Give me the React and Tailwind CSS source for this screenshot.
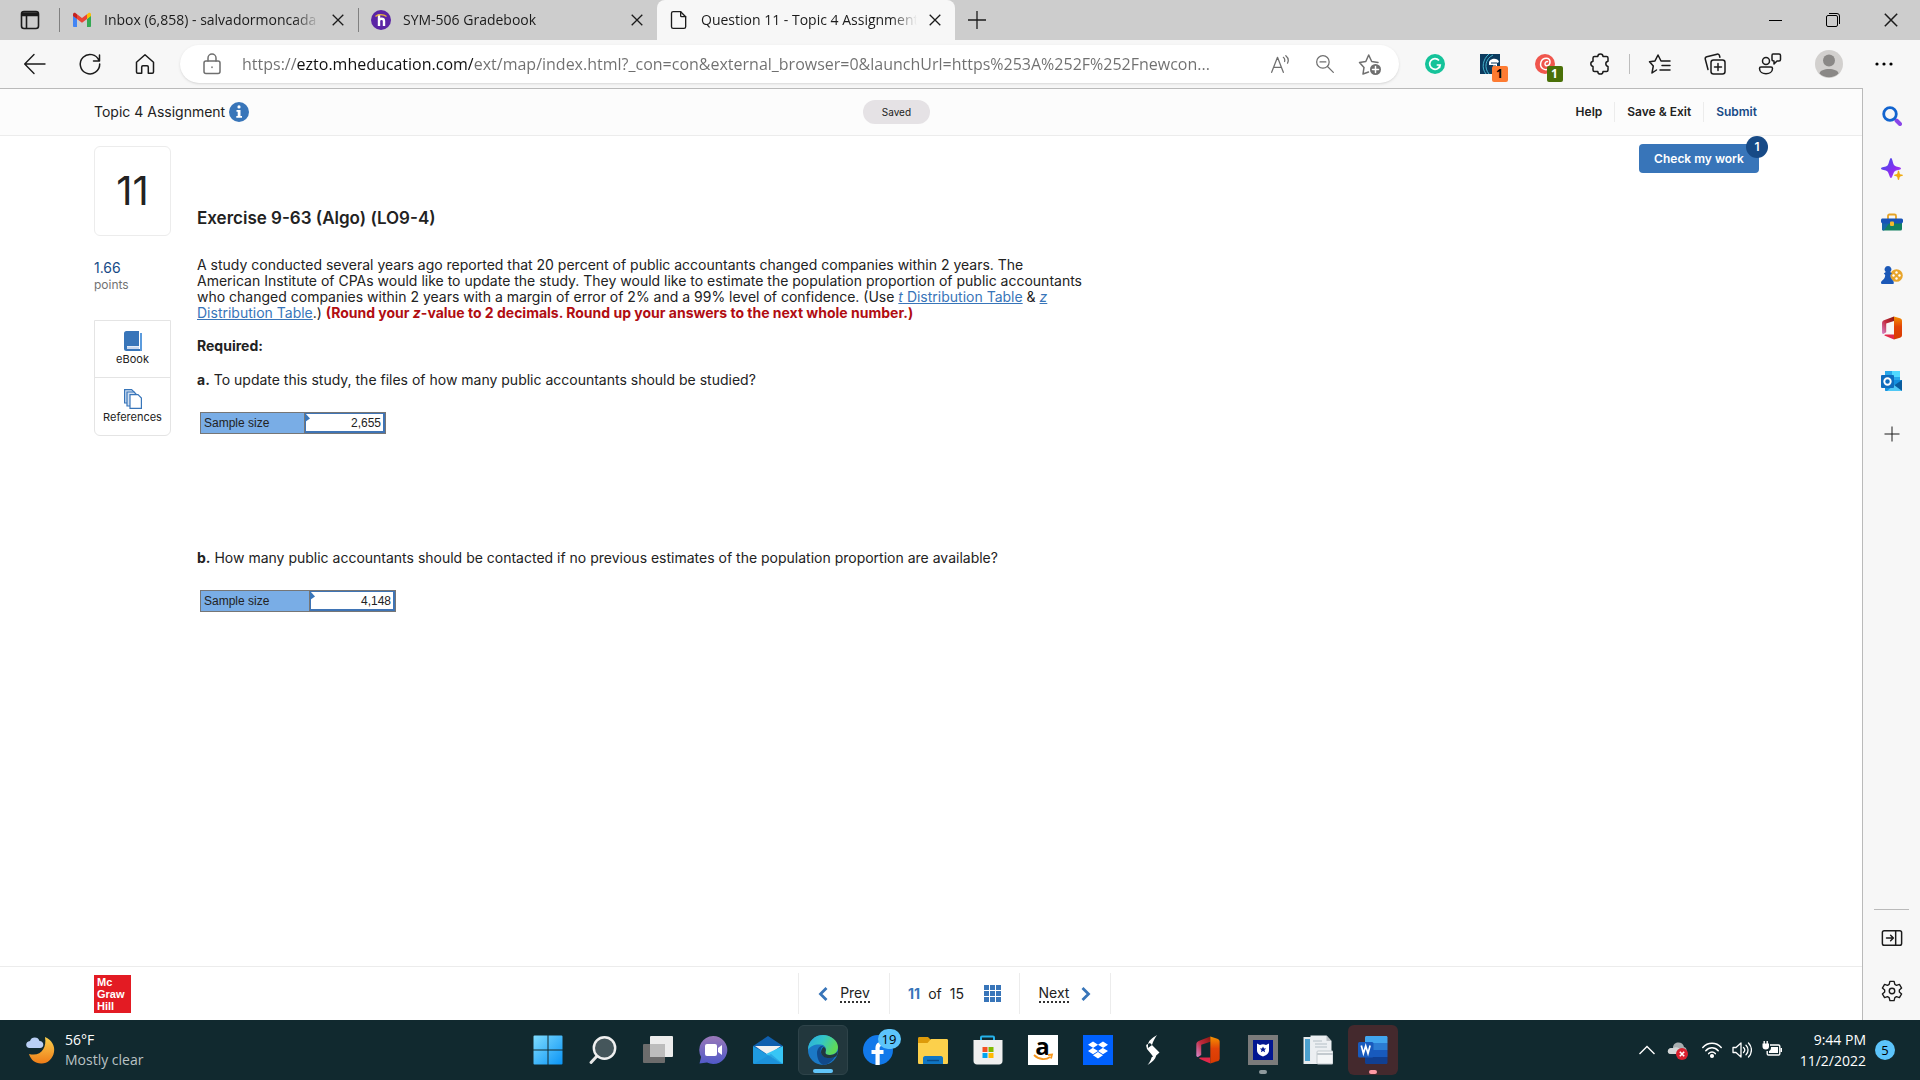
import { FaDropbox } from "react-icons/fa6";

const tabs = [
  { id: "mail", title: "Inbox (6,858) - salvadormoncada", icon: GmailIcon },
  { id: "grades", title: "SYM-506 Gradebook", icon: HonorlockIcon },
  { id: "question", title: "Question 11 - Topic 4 Assignment", icon: PageIcon, active: true }
];

const url =
  "https://ezto.mheducation.com/ext/map/index.html?_con=con&external_browser=0&launchUrl=https%253A%252F%252Fnewcon...";

function Line({ className = "w-6 h-6", width = 1.5, children }) {
  return (
    <svg className={className} viewBox="0 0 24 24" fill="none" stroke="currentColor" strokeWidth={width} strokeLinecap="round" strokeLinejoin="round">
      {children}
    </svg>
  );
}

function GmailIcon() {
  return (
    <svg className="w-5 h-5" viewBox="0 0 20 20">
      <path d="M1 5v11.2c0 .5.4.8.8.8H5V9z" fill="#4285f4" />
      <path d="M19 5v11.2c0 .5-.4.8-.8.8H15V9z" fill="#34a853" />
      <path d="M15 4.2V9l4-3V4.6c0-1.6-1.6-2.2-2.7-1.4z" fill="#fbbc04" />
      <path d="M5 9V4.2l5 3.8 5-3.8V9l-5 3.8z" fill="#ea4335" />
      <path d="M1 4.6V6l4 3V4.2L3.7 3.2C2.6 2.4 1 3 1 4.6z" fill="#c5221f" />
    </svg>
  );
}

function HonorlockIcon() {
  return (
    <svg className="w-5 h-5" viewBox="0 0 20 20">
      <circle cx="10" cy="10" r="10" fill="#5b25a5" />
      <path d="M8 4.5v11.500M8 11c0-3 5-3 5 0v5" fill="none" stroke="#fff" strokeWidth="2.4" />
      <path d="M4.500 6.500c2-2.500 8-2.500 11 0" fill="none" stroke="#e8b53a" strokeWidth="1.3" />
    </svg>
  );
}

function PageIcon() {
  return (
    <Line className="w-5 h-6" width={1.6}>
      <path d="M5 2h9l6 6v12a2 2 0 0 1-2 2H5a2 2 0 0 1-2-2V4a2 2 0 0 1 2-2z" />
      <path d="M14 2v5a1 1 0 0 0 1 1h5" />
    </Line>
  );
}

function CloseIcon({ className = "w-3 h-3" }) {
  return (
    <svg className={className} viewBox="0 0 12 12" fill="none" stroke="currentColor" strokeWidth="1.3">
      <path d="M.7.7l10.600 10.600M11.300.7L.7 11.300" />
    </svg>
  );
}

function OfficeIcon({ className = "w-6 h-6" }) {
  return (
    <svg className={className} viewBox="0 0 24 24">
      <defs>
        <linearGradient id="office-left" x1="0" y1="1" x2="1" y2="0">
          <stop offset="0" stopColor="#d98bd0" />
          <stop offset=".5" stopColor="#c22a3e" />
          <stop offset="1" stopColor="#8c1810" />
        </linearGradient>
        <linearGradient id="office-right" x1="0" y1="0" x2="0" y2="1">
          <stop offset="0" stopColor="#f59200" />
          <stop offset=".45" stopColor="#e24308" />
          <stop offset="1" stopColor="#d83b01" />
        </linearGradient>
      </defs>
      <path d="M14 .5L4 4.300C2.500 5 2 6 2 7.500v9.200c0 1 1 1.500 1.800 1l2.400-1.400V7.500L14 5z" fill="url(#office-left)" />
      <path d="M5.500 18.500H14v5l-9-3.700c-1-.5-.6-1.300.5-1.300z" fill="#e3294b" />
      <path d="M14 .5l6 1.800c1.300.4 2 1.400 2 2.700v14c0 1.300-.7 2.300-2 2.700l-6 1.800z" fill="url(#office-right)" />
    </svg>
  );
}

function Tab({ tab }) {
  const Icon = tab.icon;
  return (
    <div className={`w-[298px] min-w-0 h-10 flex items-center pl-3 pr-[14px] ${tab.active ? "bg-[#f7f7f7] rounded-t-lg" : ""}`}>
      <Icon />
      <span className="flex-1 min-w-0 ml-3 overflow-hidden whitespace-nowrap text-sm text-[#1b1b1b] [mask-image:linear-gradient(to_right,black_88%,transparent)]">
        {tab.title}
      </span>
      <button aria-label={`Close ${tab.title}`} className="ml-3">
        <CloseIcon />
      </button>
    </div>
  );
}

function TabBar() {
  return (
    <header className="h-10 flex items-center bg-[#cdcdcd] text-[#1b1b1b]">
      <button aria-label="Tab actions" className="w-[59px] flex justify-center">
        <svg className="w-5 h-5" viewBox="0 0 20 20" fill="none" stroke="currentColor" strokeWidth="1.6">
          <rect x="1.5" y="1.5" width="17" height="17" rx="2.5" />
          <path d="M2 3.500h16M2 5h16" strokeWidth="2.5" />
          <path d="M6.500 6v12" />
        </svg>
      </button>
      <span className="w-px h-6 bg-[#808080]" />
      <Tab tab={tabs[0]} />
      <span className="w-px h-6 bg-[#808080]" />
      <Tab tab={tabs[1]} />
      <Tab tab={tabs[2]} />
      <button aria-label="New tab" className="ml-3 p-px">
        <svg className="w-[18px] h-[18px]" viewBox="0 0 18 18" stroke="currentColor" strokeWidth="1.3">
          <path d="M9 0v18M0 9h18" />
        </svg>
      </button>
      <div className="ml-auto flex">
        <button aria-label="Minimize" className="w-[58px] flex justify-center items-center">
          <span className="w-[13px] h-px bg-black" />
        </button>
        <button aria-label="Restore" className="w-[58px] flex justify-center">
          <svg className="w-[14px] h-[14px]" viewBox="0 0 14 14" fill="none" stroke="black">
            <rect x=".5" y="2.5" width="11" height="11" rx="1.5" />
            <path d="M3 .5h8a2.500 2.500 0 0 1 2.500 2.500v8" />
          </svg>
        </button>
        <button aria-label="Close window" className="w-[58px] flex justify-center">
          <CloseIcon className="w-[14px] h-[14px]" />
        </button>
      </div>
    </header>
  );
}

function ToolButton({ label, children }) {
  return (
    <button aria-label={label} className="w-[55px] shrink-0 flex justify-center">
      {children}
    </button>
  );
}

function Badge({ className }) {
  return (
    <span className={`absolute left-3 top-3 w-4 h-4 rounded-xs text-xs leading-4 font-bold text-center ${className}`}>1</span>
  );
}

function Toolbar() {
  return (
    <div className="h-12 flex items-center bg-[#f7f7f7] text-[#1b1b1b] pl-[7px] pr-[9px]">
      <ToolButton label="Back">
        <Line width={1.4}><path d="M22 12H2M11 2.500L1.700 12l9.300 9.500" /></Line>
      </ToolButton>
      <ToolButton label="Refresh">
        <Line width={1.5}><path d="M21 8.500A9.700 9.700 0 1 0 21.700 12M21.500 3v6h-6" /></Line>
      </ToolButton>
      <ToolButton label="Home">
        <Line width={1.5}><path d="M3.500 10.200L12 2.700l8.500 7.500V20c0 .7-.5 1.200-1.200 1.200h-4V15c0-.7-.5-1.200-1.200-1.200H9.900c-.7 0-1.200.5-1.200 1.200v6.200h-4c-.7 0-1.200-.5-1.200-1.200z" /></Line>
      </ToolButton>
      <div className="flex-1 min-w-0 h-[38px] mx-2 pl-5 pr-[7px] flex items-center rounded-full bg-white text-[#6f6f6f] shadow-sm">
        <Line className="w-6 h-6 shrink-0">
          <rect x="4" y="9" width="16" height="12.5" rx="2" />
          <path d="M8 9V6a4 4 0 0 1 8 0v3M12 15v.5" />
        </Line>
        <input
          aria-label="Address"
          readOnly
          value={url}
          className="flex-1 min-w-0 ml-[18px] h-8 outline-none text-base text-transparent bg-clip-text bg-[linear-gradient(to_right,#6f6f6f_55px,#111_55px,#111_231px,#6f6f6f_231px)]"
        />
        <button aria-label="Read aloud" className="w-[45px] flex justify-center">
          <Line className="w-5 h-5" width={1.5}><path d="M2 22L9 4l7 18M4.500 16h9M16 4c1.500 1 2 3 1.500 5M19 2c3 2.500 3.500 6 2 9" /></Line>
        </button>
        <button aria-label="Zoom" className="w-[45px] flex justify-center">
          <Line className="w-5 h-5" width={1.5}><circle cx="9.5" cy="9.5" r="7.5" /><path d="M15 15l7 7M6 9.500h7" /></Line>
        </button>
        <button aria-label="Add to favorites" className="w-[45px] flex justify-center">
          <Line className="w-6 h-6">
            <path d="M10.500 20L5 22l1-6.600L1.500 10.500l6.300-1L10.700 3l3 6.500 6.300 1" />
            <circle cx="17.5" cy="17.5" r="5.5" fill="#6f6f6f" stroke="none" />
            <path d="M17.500 14.500v6M14.500 17.500h6" stroke="#fff" />
          </Line>
        </button>
      </div>
      <ToolButton label="Grammarly">
        <svg className="w-5 h-5" viewBox="0 0 20 20">
          <circle cx="10" cy="10" r="10" fill="#15c39a" />
          <path d="M14 6.500A5.300 5.300 0 1 0 15.200 11h-3.500M15.200 11l-.8 3" fill="none" stroke="#fff" strokeWidth="1.7" />
        </svg>
      </ToolButton>
      <ToolButton label="Capital One Shopping, 1 notification">
        <span className="relative">
          <svg className="w-5 h-5" viewBox="0 0 20 20">
            <rect width="20" height="20" fill="#0b3a5e" />
            <path d="M6 20C1 14 3 5 9 0M9 20C4 14 5 5 13 1" fill="none" stroke="#45b5cf" strokeWidth="1" />
            <path d="M9 9c0-5 9-6 10-1l-2 1v9h-4v-7H9z" fill="#fff" />
            <path d="M11 9h6M11 12h5" stroke="#0b3a5e" />
          </svg>
          <Badge className="bg-[#fd7b32] text-black" />
        </span>
      </ToolButton>
      <ToolButton label="Coupons, 1 notification">
        <span className="relative">
          <svg className="w-5 h-5" viewBox="0 0 20 20">
            <circle cx="10" cy="10" r="10" fill="#f0564d" />
            <path d="M15 14c-5 4-11 0-9-6 2-5 9-5 9 0 0 4-5 5-5 2 0-2 2-3 3-2" fill="none" stroke="#fff" strokeWidth="1.5" />
          </svg>
          <Badge className="bg-[#4a7008] text-white" />
        </span>
      </ToolButton>
      <ToolButton label="Extensions">
        <Line>
          <path d="M6.500 4.500h3.300a2.600 2.600 0 0 1 5.200 0h3.500c.8 0 1.500.7 1.500 1.500v3.200a2.700 2.700 0 0 0 0 5.300V18c0 .8-.7 1.500-1.500 1.500H15a2.600 2.600 0 0 1-5.200 0H6.500c-.8 0-1.500-.7-1.500-1.500v-3.500a2.700 2.700 0 0 1 0-5.300V6c0-.8.7-1.500 1.500-1.500z" />
        </Line>
      </ToolButton>
      <span className="w-px h-5 mx-[2px] bg-[#bdbdbd]" />
      <ToolButton label="Favorites">
        <Line>
          <path d="M8.500 18L4 21l1.300-7L1.500 9.800l5.500-.9L10 3l3 6h9M14 13.500h8M12 18h10" />
        </Line>
      </ToolButton>
      <ToolButton label="Collections">
        <Line>
          <rect x="8" y="8" width="14" height="14" rx="2.5" />
          <path d="M15 11.500v7M11.500 15h7M5 17.500L2.300 7.200C2 6 2.600 5 3.800 4.700L14 2.200c1.200-.3 2.200.3 2.500 1.500l.4 1.500" />
        </Line>
      </ToolButton>
      <ToolButton label="Shared browsing">
        <Line>
          <circle cx="8" cy="9" r="3.5" />
          <path d="M3 15h10c1 0 1.500.5 1.500 1.500 0 7-13 7-13 0 0-1 .5-1.500 1.500-1.500zM15 2h6c1 0 1.500.7 1.500 1.500v4c0 1-.7 1.500-1.500 1.500h-2l-3 3V9c-1 0-2-.5-2-1.500v-4C14 2.600 14.500 2 15 2z" />
        </Line>
      </ToolButton>
      <div className="ml-1 flex items-center">
        <ToolButton label="Profile">
          <svg className="w-7 h-7" viewBox="0 0 28 28">
            <circle cx="14" cy="14" r="14" fill="#d2d0ce" />
            <circle cx="14" cy="10.500" r="6" fill="#8a8886" />
            <path d="M4.500 23.500C5 17.500 23 17.500 23.500 23.500a14 14 0 0 1-19 0z" fill="#8a8886" />
          </svg>
        </ToolButton>
        <ToolButton label="Settings and more">
          <svg className="w-[18px] h-1" viewBox="0 0 18 4">
            <circle cx="2" cy="2" r="1.6" /><circle cx="9" cy="2" r="1.6" /><circle cx="16" cy="2" r="1.6" />
          </svg>
        </ToolButton>
      </div>
    </div>
  );
}

function PageHeader() {
  return (
    <div className="h-12 pl-[94px] pr-[93px] flex items-center justify-between bg-[#fcfcfc] border-t border-b border-t-[#bababa] border-b-[#ececec]">
      <div className="flex items-center gap-1">
        <span className="text-sm">Topic 4 Assignment</span>
        <button aria-label="Assignment information">
          <svg className="w-5 h-5" viewBox="0 0 20 20">
            <circle cx="10" cy="10" r="10" fill="#3875b9" />
            <path d="M10 3.300a1.600 1.600 0 1 1 0 3.200 1.600 1.600 0 0 1 0-3.200zM7.500 8h4v6H13v1.800H7.300V14h1.400V9.800H7.500z" fill="#fff" />
          </svg>
        </button>
      </div>
      <span className="mr-5 px-[19px] h-6 rounded-full bg-[#e5e2e5] text-[10px] leading-6">Saved</span>
      <nav className="flex items-center text-xs font-semibold leading-5 divide-x divide-[#ececec]">
        <a href="#help" className="px-3">Help</a>
        <a href="#exit" className="px-3">Save &amp; Exit</a>
        <a href="#submit" className="px-3 text-[#174a86]">Submit</a>
      </nav>
    </div>
  );
}

function QuestionAside() {
  return (
    <aside className="w-[77px] shrink-0">
      <div className="h-[90px] flex items-center justify-center border border-[#ececec] rounded-md text-[40px]">11</div>
      <p className="mt-6 text-sm leading-4 text-[#174a86]">1.66</p>
      <p className="text-xs leading-[18px] text-[#727272]">points</p>
      <div className="mt-[26px] border border-[#e4e4e4] rounded-b-md divide-y divide-[#e4e4e4] text-[11px] leading-4">
        <button className="w-full h-[57px] flex flex-col items-center justify-center">
          <svg className="w-[18px] h-5" viewBox="0 0 18 20">
            <path d="M2.500 0H15v15H3v3h14V2h1v18H2.500A2.500 2.500 0 0 1 0 17.500v-15A2.500 2.500 0 0 1 2.500 0z" fill="#3875b9" />
            <path d="M3 15.500h12v2.500H3z" fill="#c9d8ef" />
            <path d="M16 2h2v18h-2z" fill="#5b9bdd" />
          </svg>
          eBook
        </button>
        <button className="w-full h-[57px] flex flex-col items-center justify-center">
          <svg className="w-[18px] h-5" viewBox="0 0 18 20" stroke="#3875b9" strokeWidth="1.2">
            <path d="M.6.6h7l3 3V14H.6z" fill="#d3e0f1" />
            <path d="M3 3h7l3 3v11H3z" fill="#d3e0f1" />
            <path d="M6 5.600h8l3.400 3.400v10.400H6z" fill="#fff" />
          </svg>
          References
        </button>
      </div>
    </aside>
  );
}

function AnswerTable({ id, value, labelWidth, inputWidth }) {
  return (
    <table className="ml-[3px] border-collapse font-['Liberation_Sans',sans-serif] text-xs">
      <tbody>
        <tr>
          <th scope="row" className={`${labelWidth} h-[21px] p-0 pl-[3px] border border-[#767676] bg-[#79ade6] text-left font-normal`}>
            <label htmlFor={id}>Sample size</label>
          </th>
          <td className={`${inputWidth} relative p-0 border border-[#767676]`}>
            <input id={id} defaultValue={value} className="block w-full h-5 pr-[2px] border-2 border-t border-l border-[#3f74b5] bg-white text-right outline-none" />
            <span className="absolute left-0 top-0 w-[5px] h-[9px] bg-[#3875b9] [clip-path:polygon(0_0,100%_60%,0_100%)]" />
          </td>
        </tr>
      </tbody>
    </table>
  );
}

function Question() {
  return (
    <article className="ml-[26px] flex-1 text-sm leading-4">
      <h1 className="mt-[60px] text-[17px] leading-6 font-semibold">Exercise 9-63 (Algo) (LO9-4)</h1>
      <p className="mt-[27px]">
        A study conducted several years ago reported that 20 percent of public accountants changed companies within 2 years. The
        <br />
        American Institute of CPAs would like to update the study. They would like to estimate the population proportion of public accountants
        <br />
        who changed companies within 2 years with a margin of error of 2% and a 99% level of confidence. (Use{" "}
        <a href="#t-table" className="text-[#3875b9] underline"><i>t</i> Distribution Table</a> &amp;{" "}
        <a href="#z-table" className="text-[#3875b9] underline"><i>z</i><br />Distribution Table</a>.){" "}
        <strong className="font-bold text-[#b10d12]">
          (Round your <i>z</i>-value to 2 decimals. Round up your answers to the next whole number.)
        </strong>
      </p>
      <p className="mt-[17px] font-bold">Required:</p>
      <p className="mt-[18px] mb-6"><b>a.</b> To update this study, the files of how many public accountants should be studied?</p>
      <AnswerTable id="answer-a" value="2,655" labelWidth="w-[104px]" inputWidth="w-[81px]" />
      <p className="mt-[116px] mb-6"><b>b.</b> How many public accountants should be contacted if no previous estimates of the population proportion are available?</p>
      <AnswerTable id="answer-b" value="4,148" labelWidth="w-[109px]" inputWidth="w-[86px]" />
    </article>
  );
}

function Chevron({ flip }) {
  return (
    <svg className={`w-[10px] h-[14px] ${flip ? "rotate-180" : ""}`} viewBox="0 0 10 14" fill="none" stroke="#3875b9" strokeWidth="2.8">
      <path d="M8.500 1L2.500 7l6 6" />
    </svg>
  );
}

function PageFooter() {
  return (
    <footer className="h-[54px] pl-[94px] pr-[84px] flex items-center border-t border-[#ececec]">
      <div className="w-[37px] h-[38px] pl-[3px] flex flex-col justify-center bg-[#e31b23] text-white text-[11px] leading-3 font-bold font-['Liberation_Sans',sans-serif]">
        <span>Mc</span>
        <span>Graw</span>
        <span>Hill</span>
      </div>
      <nav className="flex-1 flex justify-center text-sm leading-[41px]">
        <button className="w-[91px] flex items-center justify-center gap-3 border-l border-[#ececec]">
          <Chevron />
          <span className="leading-4 border-b-2 border-dotted border-[#333]">Prev</span>
        </button>
        <div className="w-[130px] flex items-center justify-center border-l border-[#ececec]">
          <b className="text-[#3875b9]">11</b>
          <span className="ml-2">of</span>
          <span className="ml-2">15</span>
          <button aria-label="Question list" className="ml-5">
            <svg className="w-[17px] h-[17px]" viewBox="0 0 17 17" fill="#3875b9">
              <path d="M0 0h5v5H0zM6 0h5v5H6zM12 0h5v5h-5zM0 6h5v5H0zM6 6h5v5H6zM12 6h5v5h-5zM0 12h5v5H0zM6 12h5v5H6zM12 12h5v5h-5z" />
            </svg>
          </button>
        </div>
        <button className="w-[92px] flex items-center justify-center gap-3 border-x border-[#ececec]">
          <span className="leading-4 border-b-2 border-dotted border-[#333]">Next</span>
          <Chevron flip />
        </button>
      </nav>
    </footer>
  );
}

function SideButton({ label, children }) {
  return (
    <button aria-label={label} className="w-full h-[53px] flex items-center justify-center">
      {children}
    </button>
  );
}

function Sidebar() {
  return (
    <aside className="w-[58px] shrink-0 pt-px pb-[3px] flex flex-col items-center bg-[#f7f7f7] border-l border-[#bababa] text-[#1b1b1b]">
      <SideButton label="Search">
        <svg className="w-5 h-5" viewBox="0 0 20 20" fill="none">
          <path d="M12.500 12.500l2 2" stroke="#777" strokeWidth="2" />
          <path d="M14.500 14.500l3.500 3.500" stroke="#8a45e8" strokeWidth="4" strokeLinecap="round" />
          <circle cx="8" cy="8" r="6.3" stroke="#1264cf" strokeWidth="2.8" />
        </svg>
      </SideButton>
      <SideButton label="Discover">
        <svg className="w-[22px] h-[22px]" viewBox="0 0 22 22">
          <defs>
            <linearGradient id="spark" x1="0" y1="0" x2="1" y2="1">
              <stop offset="0" stopColor="#3457e8" />
              <stop offset=".6" stopColor="#8a2df0" />
              <stop offset="1" stopColor="#c04bf5" />
            </linearGradient>
          </defs>
          <path d="M10 0c1.500 0 1.800 6 3.500 7.500S20 9 20 10.500s-5 1.500-6.500 3.000S11.500 20 10 20s-2-5-3.500-6.500S0 12 0 10.500 5 9 6.500 7.500 8.500 0 10 0z" fill="url(#spark)" />
          <path d="M17.500 12.500c1 0 .8 2.800 1.500 3.500s3 .5 3 1.300-2.200.7-3 1.400-.5 3.300-1.500 3.300-.8-2.600-1.500-3.300-3-.5-3-1.400 2.200-.6 3-1.300.5-3.500 1.500-3.500z" fill="#efab12" />
        </svg>
      </SideButton>
      <SideButton label="Tools">
        <svg className="w-[22px] h-[18px]" viewBox="0 0 22 18">
          <path d="M7 6V3c0-1 .5-1.500 1.500-1.500h5c1 0 1.500.5 1.500 1.500v3" fill="none" stroke="#e6a325" strokeWidth="1.8" />
          <path d="M1 9h20v7a1.500 1.500 0 0 1-1.500 1.500h-17A1.500 1.500 0 0 1 1 16z" fill="#128060" />
          <path d="M1 9h8l-6 8.500C2 17.500 1 17 1 16z" fill="#1767a8" />
          <path d="M1.500 5.500h19a1.500 1.500 0 0 1 1.500 1.500v1.500c0 1-1 2-2 2H2c-1 0-2-1-2-2V7c0-.8.7-1.500 1.500-1.500z" fill="#1753b8" />
          <rect x="9" y="8.500" width="4" height="4.500" rx="1" fill="#f3b92b" />
        </svg>
      </SideButton>
      <SideButton label="Games">
        <svg className="w-[22px] h-[18px]" viewBox="0 0 22 18">
          <circle cx="15.5" cy="9.5" r="6.3" fill="#e8a52c" />
          <g fill="#fff"><circle cx="15.5" cy="6.5" r="1.2" /><circle cx="15.5" cy="12.5" r="1.2" /><circle cx="12.5" cy="9.5" r="1.2" /><circle cx="18.5" cy="9.5" r="1.2" /></g>
          <path d="M7 0a3.400 3.400 0 0 1 2.200 6L11 7.500 9.300 9c0 3 1.500 4.500 3 6 .7 1 .7 3-.3 3H1c-1.300 0-1.300-2-.3-3 2-1.500 3.500-3 3.500-6L2.800 7.500 4.800 6A3.400 3.400 0 0 1 7 0z" fill="#1b58b7" />
        </svg>
      </SideButton>
      <SideButton label="Office"><OfficeIcon /></SideButton>
      <SideButton label="Outlook">
        <svg className="w-[22px] h-5" viewBox="0 0 22 20">
          <path d="M4 0h15v10H4z" fill="#28a8ea" />
          <path d="M11 0h8v6h-8z" fill="#50d9ff" />
          <path d="M4 9h17v10c0 .6-.4 1-1 1H5c-.6 0-1-.4-1-1z" fill="#1490df" />
          <path d="M13 14.500l8-5.500v11z" fill="#0a5c9e" />
          <path d="M6 20h15l-8-6z" fill="#50c8f5" />
          <rect y="4" width="13" height="13" rx="1" fill="#0f6cbd" />
          <circle cx="6.5" cy="10.5" r="3.2" fill="none" stroke="#fff" strokeWidth="1.9" />
        </svg>
      </SideButton>
      <SideButton label="Add">
        <svg className="w-4 h-4" viewBox="0 0 16 16" stroke="currentColor"><path d="M8 .5v15M.5 8h15" /></svg>
      </SideButton>
      <span className="mt-auto mb-px w-[35px] h-px bg-[#bababa]" />
      <SideButton label="Hide sidebar">
        <Line className="w-[22px] h-[22px]" width={1.6}><rect x="1.5" y="4" width="21" height="16" rx="2" /><path d="M16 4v16M6 12h7M10.500 9l3 3-3 3" /></Line>
      </SideButton>
      <SideButton label="Settings">
        <Line className="w-[22px] h-[22px]" width={1.5}>
          <path d="M9.700 1.500h4.600l.8 3.300 1.800 1 3.200-1 2.400 4-2.500 2.200v2l2.500 2.200-2.400 4-3.200-1-1.800 1-.8 3.300H9.700l-.8-3.300-1.800-1-3.200 1-2.400-4L4 13v-2L1.500 8.800l2.400-4 3.200 1 1.800-1z" />
          <circle cx="12" cy="12" r="3" />
        </Line>
      </SideButton>
    </aside>
  );
}

function TaskButton({ label, tile = "", dot = "", children }) {
  return (
    <button aria-label={label} className="w-[55px] h-[60px] flex items-center justify-center">
      <span className={`relative w-[50px] h-[50px] flex items-center justify-center rounded-md ${tile}`}>
        {children}
        {dot && <span className={`absolute bottom-px h-1 rounded-full ${dot}`} />}
      </span>
    </button>
  );
}

function TaskIcon({ children }) {
  return <svg className="w-[30px] h-[30px]" viewBox="0 0 30 30">{children}</svg>;
}

function TaskbarApps() {
  return (
    <div className="flex">
      <TaskButton label="Start">
        <TaskIcon>
          <defs>
            <linearGradient id="win" x1="0" y1="0" x2="1" y2="1">
              <stop offset="0" stopColor="#7fdcff" />
              <stop offset="1" stopColor="#0a94f5" />
            </linearGradient>
          </defs>
          <path d="M1.500.5h13v14H.5v-13a1 1 0 0 1 1-1zM15.500.5h13a1 1 0 0 1 1 1v13h-14zM.5 15.500h14v14h-13a1 1 0 0 1-1-1zM15.500 15.500h14v13a1 1 0 0 1-1 1h-13z" fill="url(#win)" />
        </TaskIcon>
      </TaskButton>
      <TaskButton label="Search">
        <TaskIcon>
          <path d="M9 21l-6 6.500" stroke="#e6e6e6" strokeWidth="3" strokeLinecap="round" />
          <circle cx="16.5" cy="13" r="10.7" fill="#45565b" stroke="#f0f0f0" strokeWidth="2.4" />
        </TaskIcon>
      </TaskButton>
      <TaskButton label="Task view">
        <TaskIcon>
          <rect y="9" width="22" height="19" rx="1" fill="#6c6c6c" />
          <rect x="7" y="1" width="23" height="21" rx="1" fill="#ececec" />
          <path d="M7 9h15v13H7z" fill="#bcbcbc" />
        </TaskIcon>
      </TaskButton>
      <TaskButton label="Chat">
        <TaskIcon>
          <defs>
            <linearGradient id="chat" x1="0" y1="0" x2="0" y2="1">
              <stop offset="0" stopColor="#9a78b8" />
              <stop offset="1" stopColor="#5059c9" />
            </linearGradient>
          </defs>
          <path d="M15 1a14 14 0 1 1-6 26.500l-7.500 1 1.600-6.500A14 14 0 0 1 15 1z" fill="url(#chat)" />
          <rect x="7" y="9" width="12" height="12" rx="2" fill="#fff" />
          <path d="M20 13l4-3v10l-4-3z" fill="#fff" />
        </TaskIcon>
      </TaskButton>
      <TaskButton label="Mail">
        <TaskIcon>
          <path d="M0 11L15 1l15 10-15 12z" fill="#0f5fae" />
          <path d="M2 11h26l-13 9z" fill="#f1f1f1" />
          <path d="M0 11l30 18H1a1 1 0 0 1-1-1z" fill="#1f9be0" />
          <path d="M30 11v17a1 1 0 0 1-1 1L13 19z" fill="#37c6f5" />
          <path d="M30 29H1l17-10z" fill="#1a8ad6" opacity=".5" />
        </TaskIcon>
      </TaskButton>
      <TaskButton label="Microsoft Edge" tile="bg-[#22373d] border border-[#2e4349]" dot="w-5 bg-[#61c5f8]">
        <TaskIcon>
          <defs>
            <linearGradient id="edge-top" x1="0" y1="0" x2="1" y2=".4">
              <stop offset="0" stopColor="#2ba9e0" />
              <stop offset=".5" stopColor="#33c6c8" />
              <stop offset="1" stopColor="#5fd957" />
            </linearGradient>
          </defs>
          <circle cx="15" cy="15" r="15" fill="#1b79c6" />
          <path d="M0 15C0 6 7 0 15 0s15 6 15 12c0 5-4 8-8 8-4 0-5-1.500-4.500-3 1.500-3 0-7-5-7.500C7 9 2 11 0 15z" fill="url(#edge-top)" />
          <path d="M9 18c0-5 4-8.500 7-7-3 1-4 4-3 7 2 5 8 6 14 3.500C24 27 19 30 15 30c-4-2-6-7-6-12z" fill="#114a8b" />
          <path d="M17.500 17c-.5 2 1 3 4.500 3 3 0 5-1 8-4l-1.500 5C22 25 13 23 13 17c0-3 2-5 3-5 2 1 2.200 3 1.500 5z" fill="#22373d" />
        </TaskIcon>
      </TaskButton>
      <TaskButton label="Facebook, 19 notifications">
        <TaskIcon>
          <circle cx="15" cy="15" r="15" fill="#1279ea" />
          <path d="M12.500 30V19H8.500v-4h4c-.5-6 2-8.500 7-7.500V11c-2.500-.2-3 .5-2.800 4h3.800v4h-3.800v11z" fill="#fff" />
        </TaskIcon>
        <span className="absolute top-1 right-[2px] w-[23px] h-5 rounded-full bg-[#5cc4fb] text-black text-[13px] leading-5 text-center">19</span>
      </TaskButton>
      <TaskButton label="File Explorer">
        <TaskIcon>
          <path d="M0 3.500C0 2.500.5 2 1.500 2H10l3 3-3 4H0z" fill="#dd9a0a" />
          <path d="M13 4h15.500c1 0 1.500.5 1.500 1.500v22c0 1-.5 1.500-1.500 1.500h-27c-1 0-1.500-.5-1.500-1.500V8h9.500z" fill="#fcd04b" />
          <path d="M5 29v-6c0-1 1-2 2-2h16c1 0 2 1 2 2v6z" fill="#1076c4" />
          <path d="M9 25.500h12" stroke="#0a4a86" strokeWidth="1.4" />
        </TaskIcon>
      </TaskButton>
      <TaskButton label="Microsoft Store">
        <TaskIcon>
          <path d="M8 6V2.500C8 1.700 8.500 1.500 9 1.500h11c.5 0 1 .2 1 1V6" fill="none" stroke="#25b2ea" strokeWidth="2" />
          <path d="M.5 5h29v21c0 2-1.500 3.500-3.500 3.500H4C2 29.500.5 28 .5 26z" fill="#efefef" />
          <path d="M9.500 12h5v5h-5z" fill="#f25022" /><path d="M15.500 12h5v5h-5z" fill="#7fba00" />
          <path d="M9.500 18h5v5h-5z" fill="#00a4ef" /><path d="M15.500 18h5v5h-5z" fill="#ffb900" />
        </TaskIcon>
      </TaskButton>
      <TaskButton label="Amazon">
        <span className="relative w-[30px] h-[30px] bg-white text-black text-[24px] leading-[22px] font-bold text-center">
          a
          <svg className="absolute left-1 bottom-1 w-[22px] h-2" viewBox="0 0 22 8" fill="none" stroke="#f6971e" strokeWidth="1.8">
            <path d="M2 2c5 5 12 5 16 2M16 2l4-.5-1 4" />
          </svg>
        </span>
      </TaskButton>
      <TaskButton label="Dropbox">
        <span className="w-[30px] h-[30px] flex items-center justify-center bg-[#0061fe] text-white"><FaDropbox className="w-5 h-5" /></span>
      </TaskButton>
      <TaskButton label="Slate">
        <TaskIcon>
          <path d="M19 0c-5 3-9 6-9 10v3l4-3c1-4 3-7 5-10zM8 10l4-2 9.500 9.500-5.500 5z" fill="#fff" />
          <path d="M8 10l1 4 7 8.500 1-1zM9.500 30c5-3 8-6 8.500-9v-2l-4.500 3.500c-.5 2.500-2 5-4 7.500z" fill="#fff" />
        </TaskIcon>
      </TaskButton>
      <TaskButton label="Office"><OfficeIcon className="w-7 h-[30px]" /></TaskButton>
      <TaskButton label="Police badge" dot="w-2 bg-[#8f9a9d]">
        <TaskIcon>
          <rect width="30" height="30" fill="#7b7b7b" />
          <rect x="5" y="5" width="20" height="20" fill="#021691" />
          <path d="M9 8.500l3 1.500c2-1 4-1 6 0l3-1.500v7c0 3-3 5-6 6-3-1-6-3-6-6z" fill="#fff" />
          <path d="M15 11.500l1 2h2.200l-1.700 1.500.6 2.300-2.100-1.200-2.100 1.200.6-2.300-1.700-1.500H14z" fill="#021691" />
        </TaskIcon>
      </TaskButton>
      <TaskButton label="Documents">
        <TaskIcon>
          <path d="M.5 2H9v27H.5z" fill="#e6ebee" />
          <path d="M2 4h5v22H2z" fill="#4aa0cf" />
          <path d="M7.500.5h16L28.500 6v23h-21z" fill="#eceff2" />
          <path d="M23.500.5V6h5z" fill="#bcc2c6" />
          <path d="M10 6h9M12 9h12M12 12h12" stroke="#d0d7dc" strokeWidth="2" />
          <rect x="14" y="16" width="16" height="13" rx="1" fill="#f4f6f7" stroke="#c3cacf" />
          <path d="M14 19h16" stroke="#c3cacf" strokeWidth="2" />
        </TaskIcon>
      </TaskButton>
      <TaskButton label="Word" tile="bg-[#44292d]" dot="w-2 bg-[#ff99a4]">
        <TaskIcon>
          <path d="M7 2.500C7 1.700 7.500 1 8.500 1H28c1 0 1.500.7 1.500 1.500V8H7z" fill="#41a5ee" />
          <path d="M7 8h22.500v7H7z" fill="#2b7cd3" />
          <path d="M7 15h22.500v7H7z" fill="#185abd" />
          <path d="M7 22h22.500v5.500c0 .8-.5 1.500-1.500 1.500H8.500C7.500 29 7 28.300 7 27.500z" fill="#103f91" />
          <rect x="0" y="7" width="15.5" height="15.5" rx="1.5" fill="#185abd" />
          <path d="M3.300 10.500l2.100 8 2.300-7.500 2.300 7.500 2.100-8" fill="none" stroke="#fff" strokeWidth="1.7" />
        </TaskIcon>
      </TaskButton>
    </div>
  );
}

function Taskbar() {
  return (
    <footer className="h-[60px] shrink-0 grid grid-cols-[1fr_auto_1fr] items-center bg-[#11292f] text-white">
      <button className="pl-[26px] flex items-center gap-[10px] text-left text-sm leading-5">
        <svg className="w-[29px] h-[30px]" viewBox="0 0 29 30">
          <defs>
            <linearGradient id="moon" x1="0" y1="0" x2="0" y2="1">
              <stop offset="0" stopColor="#fad04e" />
              <stop offset="1" stopColor="#ef7d18" />
            </linearGradient>
          </defs>
          <path d="M19 2c7 3 10 9 9 15-1 7-7 12-13 11.500C9 28.500 5 25 3 19c12 3 18-6 16-17z" fill="url(#moon)" />
          <path d="M4 6a5 5 0 0 1 9.500 0c5 0 5 7 .5 7H3.500C-1 13-1 6.500 4 6z" fill="#b9cff5" />
        </svg>
        <span className="py-[10px]">
          56°F<br />
          <span className="text-[#bac2c4]">Mostly clear</span>
        </span>
      </button>
      <TaskbarApps />
      <div className="flex items-center justify-end pr-[25px] text-sm leading-[21px]">
        <button aria-label="Show hidden icons" className="mr-3">
          <svg className="w-4 h-4" viewBox="0 0 16 16" fill="none" stroke="white" strokeWidth="1.4"><path d="M.5 12L8 4.500l7.500 7.500" /></svg>
        </button>
        <button aria-label="OneDrive" className="mr-[14px]">
          <svg className="w-[21px] h-5" viewBox="0 0 21 20">
            <path d="M6 8c0-7 10-7 11-1 4 1 3 7 0 7H4C-1 14 0 7 6 8z" fill="#a9afb1" />
            <path d="M6 8c3-2 7 0 9 3l-2 3H4C-1 14 0 7 6 8z" fill="#d3d6d7" />
            <circle cx="15" cy="14" r="6" fill="#d9202e" />
            <path d="M12.800 11.800l4.400 4.400M17.200 11.800l-4.400 4.400" stroke="#fff" strokeWidth="1.6" />
          </svg>
        </button>
        <button aria-label="Network, volume and battery" className="flex items-center gap-[10px] mr-[18px]">
          <svg className="w-5 h-5" viewBox="0 0 20 20" fill="none" stroke="white" strokeWidth="1.5" strokeLinecap="round">
            <path d="M.8 7.500c5-5.600 13.400-5.600 18.400 0M3.800 10.700c3.400-3.900 9-3.900 12.400 0M6.700 13.600c1.900-2 4.700-2 6.600 0" />
            <circle cx="10" cy="16" r="1.3" fill="white" />
          </svg>
          <svg className="w-5 h-5" viewBox="0 0 20 20" fill="none" stroke="white" strokeWidth="1.3" strokeLinecap="round" strokeLinejoin="round">
            <path d="M1 7.500h3l5-4.500v14l-5-4.500H1zM11.500 7.500c1.500 1.500 1.500 3.500 0 5M14 5.200c2.700 2.700 2.700 6.900 0 9.600M16.500 3c3.900 4 3.900 10 0 14" />
          </svg>
          <svg className="w-5 h-5" viewBox="0 0 20 20" fill="none" stroke="white" strokeWidth="1.4">
            <path d="M8 5h8.500c.8 0 1.300.5 1.300 1.300v7.400c0 .8-.5 1.300-1.300 1.300H6.500c-.8 0-1.300-.5-1.300-1.300V11" />
            <path d="M9 7h7v6H7v-2c1.500-.5 2-1.500 2-4zM.5 3.500H7v3c0 2-1 3-3.200 3S.5 8.500.5 6.500zM18.500 8H20v4h-1.500z" fill="white" stroke="none" />
            <path d="M2.200 1v3M5.200 1v3" />
          </svg>
        </button>
        <button className="text-right mr-[9px] min-w-[66px]">9:44 PM<br />11/2/2022</button>
        <button aria-label="5 notifications" className="w-5 h-5 rounded-full bg-[#5cc4fb] text-black text-[13px] leading-5">5</button>
      </div>
    </footer>
  );
}

export default function App() {
  return (
    <div className="min-h-screen flex flex-col bg-white font-['Open_Sans',sans-serif]">
      <TabBar />
      <Toolbar />
      <div className="flex-1 flex">
        <main className="flex-1 min-w-0 flex flex-col font-['Inter',sans-serif] text-[#222]">
          <PageHeader />
          <div className="flex-1 pl-[94px] pr-[103px] pt-[10px] flex items-start">
            <QuestionAside />
            <Question />
            <button className="relative -mt-[2px] w-[120px] h-[29px] rounded-sm bg-[#3875b9] text-white text-xs font-semibold">
              Check my work
              <span className="absolute -right-[9px] -top-2 w-[22px] h-[22px] rounded-full bg-[#174a86] leading-[22px]">1</span>
            </button>
          </div>
          <PageFooter />
        </main>
        <Sidebar />
      </div>
      <Taskbar />
    </div>
  );
}
